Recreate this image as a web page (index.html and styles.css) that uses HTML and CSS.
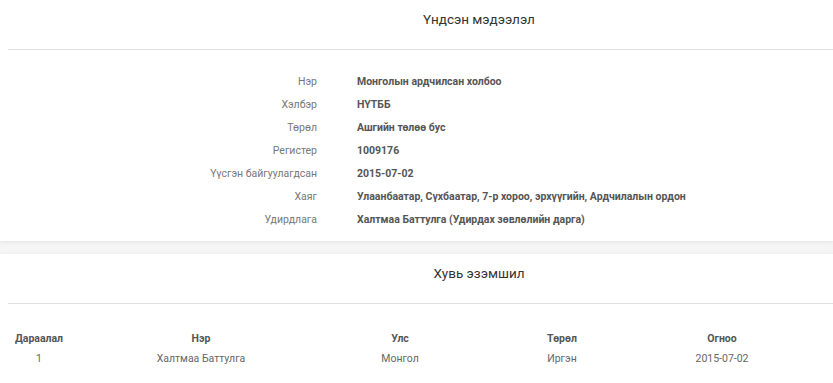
FILE: index.html
```html
<!DOCTYPE html>
<html lang="mn">
<head>
    <meta charset="UTF-8">
    <meta name="viewport" content="width=device-width, initial-scale=1.0">
    <title>Байгууллагын мэдээлэл</title>
    <link rel="stylesheet" href="styles.css">
</head>
<body>
    <div class="panel">
        <div class="panel-inner">
            <div class="panel-title">Үндсэн мэдээлэл</div>
            <div class="info">
                <div class="info-label">Нэр</div>
                <div class="info-value">Монголын ардчилсан холбоо</div>
                <div class="info-label">Хэлбэр</div>
                <div class="info-value">НҮТББ</div>
                <div class="info-label">Төрөл</div>
                <div class="info-value">Ашгийн төлөө бус</div>
                <div class="info-label">Регистер</div>
                <div class="info-value">1009176</div>
                <div class="info-label">Үүсгэн байгуулагдсан</div>
                <div class="info-value">2015-07-02</div>
                <div class="info-label">Хаяг</div>
                <div class="info-value">Улаанбаатар, Сүхбаатар, 7-р хороо, эрхүүгийн, Ардчилалын ордон</div>
                <div class="info-label">Удирдлага</div>
                <div class="info-value">Халтмаа Баттулга (Удирдах зөвлөлийн дарга)</div>
            </div>
        </div>
    </div>

    <div class="panel">
        <div class="panel-inner">
            <div class="panel-title">Хувь эзэмшил</div>
            <div class="owners">
                <div class="owners-row owners-head">
                    <div>Дараалал</div>
                    <div>Нэр</div>
                    <div>Улс</div>
                    <div>Төрөл</div>
                    <div>Огноо</div>
                </div>
                <div class="owners-row">
                    <div>1</div>
                    <div>Халтмаа Баттулга</div>
                    <div>Монгол</div>
                    <div>Иргэн</div>
                    <div>2015-07-02</div>
                </div>
            </div>
        </div>
    </div>
</body>
</html>
```

FILE: styles.css
```css
body {
    margin: 0;
    background: #f5f5f5;
    font-family: 'Roboto', 'Liberation Sans', sans-serif;
    font-size: 10.5px;
    color: #555;
}
.panel {
    background: #fff;
    box-shadow: 0 1px 4px rgba(0, 0, 0, 0.08);
    margin-bottom: 13px;
    padding-left: 8px;
    overflow: hidden;
}
.panel-inner {
    width: 942px;
}
.panel-title {
    height: 50px;
    box-sizing: border-box;
    padding-top: 10px;
    line-height: 18px;
    font-size: 13.5px;
    color: #333;
    text-align: center;
    border-bottom: 1px solid #e0e0e0;
}
.info {
    display: grid;
    grid-template-columns: 309px 1fr;
    column-gap: 40px;
    grid-auto-rows: 23px;
    align-items: center;
    padding: 20px 0 10px;
}
.info-label {
    text-align: right;
    color: #777;
}
.info-value {
    font-weight: bold;
    color: #555;
}
.owners {
    padding: 24px 0 20px;
}
.owners-row {
    display: grid;
    grid-template-columns: 62px 262px 136px 188px 132px;
    height: 20px;
    align-items: center;
    text-align: center;
    color: #666;
}
.owners-head {
    font-weight: bold;
    color: #555;
}
```
